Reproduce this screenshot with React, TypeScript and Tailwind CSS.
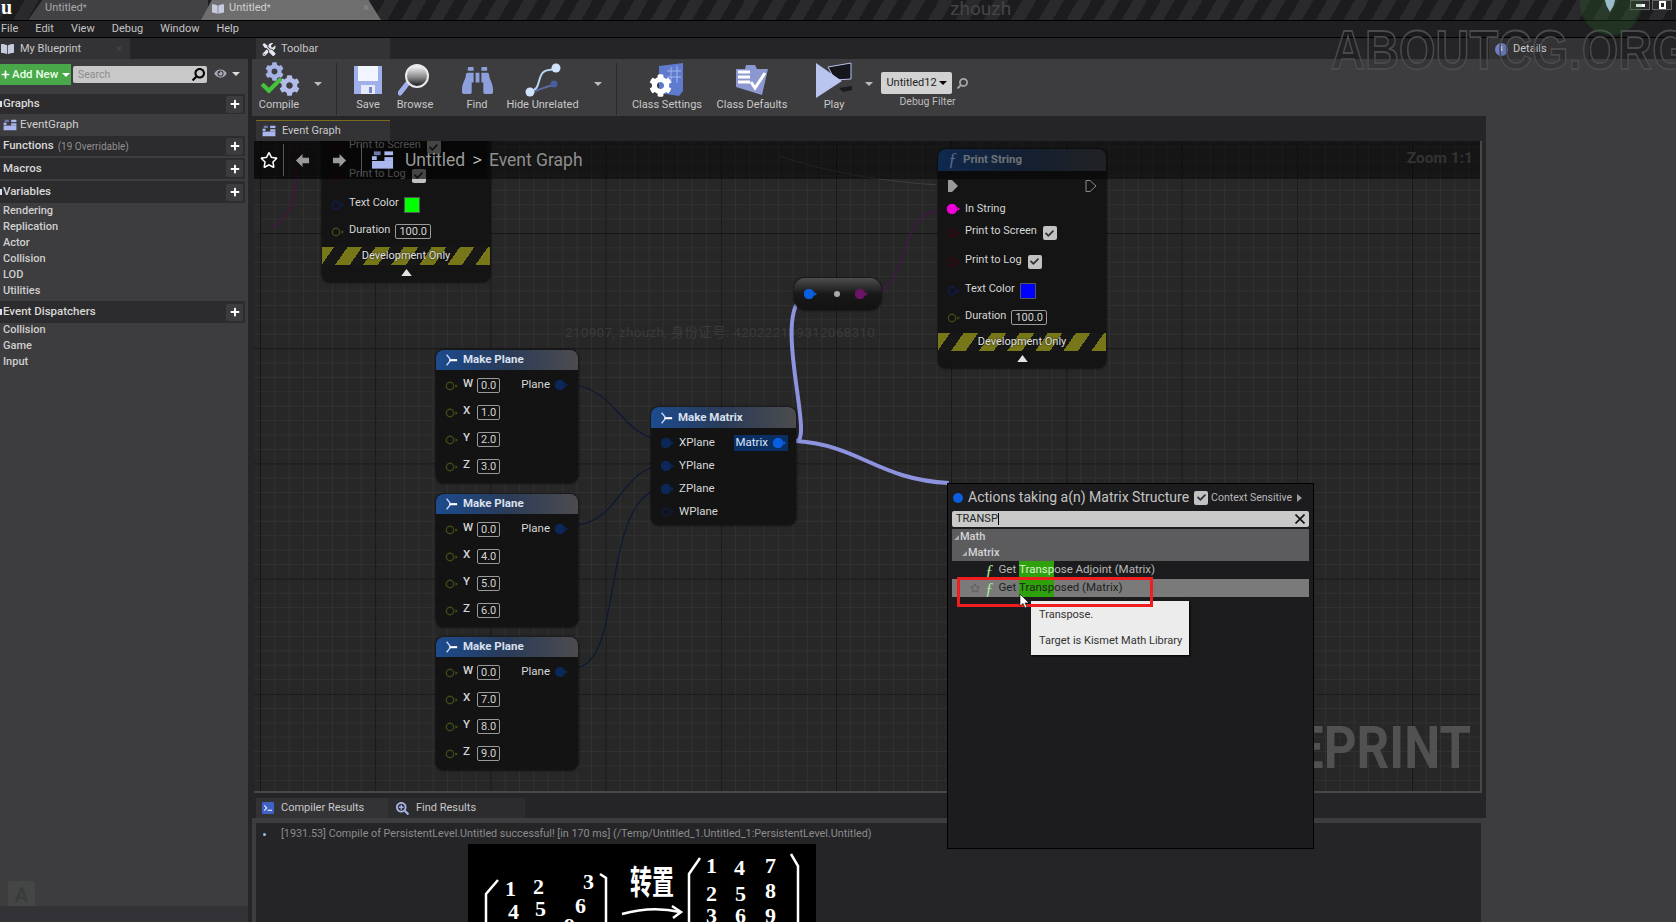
import React from 'react'
import { clsx } from 'clsx'
import { FaBookOpen, FaCheck, FaCog, FaEye, FaPlus, FaRegStar, FaSearch, FaTools, FaBinoculars, FaSearchPlus, FaTerminal } from 'react-icons/fa'

const GraphIcon = ({ className }: { className?: string }) => (
  <svg viewBox="0 0 24 20" className={className} fill="#aab6ee">
    <rect x="1" y="11" width="22" height="8" />
    <rect x="1" y="6" width="5" height="4" />
    <rect x="14" y="1" width="9" height="4" />
    <rect x="14" y="7" width="9" height="4" />
    <rect x="3" y="1" width="7" height="4" fill="#6d78b0" />
  </svg>
)

const MakeIcon = () => (
  <svg viewBox="0 0 16 16" className="h-[14px] w-[14px] shrink-0" fill="none">
    <path d="M3 2 L7 7 M3 14 L7 9" stroke="#c5d6ff" strokeWidth="1.6" />
    <rect x="6" y="7" width="9" height="2.4" fill="#ffffff" />
  </svg>
)

function Pin({ color, fill, arrow = true }: { color: string; fill?: boolean; arrow?: boolean }) {
  return (
    <svg viewBox="0 0 14 10" className="h-[10px] w-[14px] shrink-0">
      <circle cx="5" cy="5" r={fill ? 4.5 : 3.7} fill={fill ? color : 'none'} stroke={color} strokeWidth="1.4" />
      {arrow && <path d="M10.4 3 L13 5 L10.4 7 Z" fill={color} />}
    </svg>
  )
}

const InputBox = ({ value, className }: { value: string; className?: string }) => (
  <span className={clsx('rounded-[2px] border border-[#9a9a9a] px-[3px] text-[11px] leading-[13px] text-[#d4d4d4]', className)}>
    {value}
  </span>
)

function CheckBox({ className }: { className?: string }) {
  return (
    <span className={clsx('flex h-[14px] w-[14px] shrink-0 items-center justify-center rounded-[2px] bg-[#c2c2c2]', className)}>
      <FaCheck className="h-[9px] w-[9px] text-[#333]" />
    </span>
  )
}

function MakePlane({ className, values }: { className: string; values: string[] }) {
  const labels = ['W', 'X', 'Y', 'Z']
  return (
    <div className={clsx('absolute flex h-[133px] w-[142px] flex-col overflow-hidden rounded-lg bg-[#131314] shadow-[0_0_3px_#000]', className)}>
      <div className="flex h-[20px] items-center gap-[5px] bg-[linear-gradient(90deg,#1c4b8e,#2a3b58_50%,#4c4c4e)] pl-[8px] text-[11.5px] font-bold text-[#d9e0ee]">
        <MakeIcon />
        Make Plane
      </div>
      <div className="pt-[2px]">
        {labels.map((label, i) => (
          <div key={label} className="flex h-[27px] items-center pl-[9px] text-[11.5px] text-[#d6d6d6]">
            <Pin color="#3f4a18" />
            <span className="ml-[4px] mr-[5px] -mt-[3px] w-[9px] font-medium">{label}</span>
            <InputBox value={values[i]} />
            {i === 0 && (
              <span className="ml-auto mr-[9px] -mt-[2px] flex items-center gap-[5px]">
                Plane
                <Pin color="#0b2858" fill />
              </span>
            )}
          </div>
        ))}
      </div>
    </div>
  )
}

function PrintString({ className, swatch }: { className: string; swatch: string }) {
  return (
    <div className={clsx('absolute h-[219px] w-[168px] overflow-hidden rounded-lg bg-[#131413] text-[11px] text-[#d6d6d6] shadow-[0_0_3px_#000]', className)}>
      <div className="flex h-[22px] items-center gap-[6px] bg-[linear-gradient(90deg,#1c4b8e,#253a5c_50%,#3d3d40)] pl-[10px] text-[11.5px] font-bold text-[#c4ccd8]">
        <span className="text-[18px] italic [font-family:'Liberation_Serif',serif] font-normal text-[#9ec1f4]">ƒ</span>
        Print String
      </div>
      <div className="flex h-[26px] items-center justify-between px-[9px] pt-[3px]">
        <svg viewBox="0 0 12 12" className="h-[12px] w-[12px]"><path d="M1 0 H5 L11 6 L5 12 H1 Z" fill="#9a9a9a" /></svg>
        <svg viewBox="0 0 12 12" className="h-[12px] w-[12px]"><path d="M1 0.5 H5 L11 6 L5 11.5 H1 Z" fill="none" stroke="#8a8a8a" /></svg>
      </div>
      <div className="flex h-[24px] items-center gap-[4px] pl-[9px]">
        <Pin color="#f000d8" fill />
        In String
      </div>
      <div className="flex h-[24px] items-center gap-[4px] pl-[9px]">
        <Pin color="#3d0712" />
        <span className="-mt-[3px]">Print to Screen</span>
        <CheckBox className="ml-[2px]" />
      </div>
      <div className="flex h-[33px] items-center gap-[4px] pl-[9px]">
        <Pin color="#3d0712" />
        <span className="-mt-[3px]">Print to Log</span>
        <CheckBox className="ml-[2px]" />
      </div>
      <div className="flex h-[26px] items-center gap-[4px] pl-[9px]">
        <Pin color="#101c58" />
        <span className="-mt-[3px]">Text Color</span>
        <span className={clsx('ml-[1px] h-[16px] w-[16px] border border-[#555]', swatch)} />
      </div>
      <div className="flex h-[27px] items-center gap-[4px] pl-[9px]">
        <Pin color="#3f4a18" />
        <span className="-mt-[3px]">Duration</span>
        <InputBox value="100.0" className="ml-[1px]" />
      </div>
      <div className="mt-[2px] flex h-[18px] items-center justify-center bg-[repeating-linear-gradient(-55deg,#77771a_0_12px,#171717_12px_23px)] text-[#e0e0e0] [text-shadow:0_0_2px_#000]">
        Development Only
      </div>
      <div className="flex h-[14px] items-center justify-center">
        <svg viewBox="0 0 12 8" className="h-[7px] w-[11px]"><path d="M6 0 L12 8 H0 Z" fill="#e4e4e4" /></svg>
      </div>
    </div>
  )
}

function MakeMatrix() {
  const rows = [
    { label: 'XPlane', pin: '#0b2858', fill: true },
    { label: 'YPlane', pin: '#0b2858', fill: true },
    { label: 'ZPlane', pin: '#0b2858', fill: true },
    { label: 'WPlane', pin: '#101c48', fill: false },
  ]
  return (
    <div className="absolute left-[397px] top-[266px] h-[118px] w-[145px] overflow-hidden rounded-lg bg-[#131314] text-[11.5px] text-[#d6d6d6] shadow-[0_0_3px_#000]">
      <div className="flex h-[21px] items-center gap-[5px] bg-[linear-gradient(90deg,#1c4b8e,#2a3b58_50%,#4c4c4e)] pl-[8px] font-bold text-[#d9e0ee]">
        <MakeIcon />
        Make Matrix
      </div>
      <div className="pt-[3px]">
        {rows.map((row, i) => (
          <div key={row.label} className="flex h-[23px] items-center gap-[4px] pl-[10px]">
            <Pin color={row.pin} fill={row.fill} />
            {row.label}
            {i === 0 && (
              <span className="ml-auto mr-[8px] flex h-[16px] items-center gap-[5px] bg-[#0c2f63] pl-[2px] pr-[1px] text-[#dbe6ff]">
                Matrix
                <Pin color="#0a5fe0" fill />
              </span>
            )}
          </div>
        ))}
      </div>
    </div>
  )
}

function Wires() {
  return (
    <svg viewBox="254 140 1228 652" className="absolute inset-0 h-full w-full" fill="none">
      <path d="M578 385 C620 395 620 435 665 441" stroke="#0c1838" strokeWidth="1.2" />
      <path d="M578 525 C620 520 620 470 665 464" stroke="#0c1838" strokeWidth="1.2" />
      <path d="M578 668 C625 660 600 495 665 487" stroke="#0c1838" strokeWidth="1.2" />
      <path d="M270 228 C300 210 292 185 298 140" stroke="#4a1440" strokeWidth="1.5" />
      <path d="M780 155 C830 172 880 180 938 184" stroke="#3c3c3c" strokeWidth="1.2" />
      <path d="M868 294 C915 290 895 215 940 210" stroke="#4a1450" strokeWidth="1.2" />
      <path d="M782 441 H797 C815 441 775 320 802 298 L809 294" stroke="#8e93e0" strokeWidth="4" />
      <path d="M782 441 H797 C860 445 880 480 950 483" stroke="#8e93e0" strokeWidth="4" />
    </svg>
  )
}

function SectionHeader({ label, note, marker, className }: { label: string; note?: string; marker?: boolean; className: string }) {
  return (
    <div className={clsx('flex w-[245px] items-center bg-[#2c2b2d] pl-[3px] pr-[2px] text-[11.5px] font-medium text-[#d8d8d8]', className)}>
      {marker && <span className="-ml-[3px] mr-[1px] h-[6px] w-[2px] bg-[#ddd]" />}
      {label}
      {note && <span className="ml-[4px] text-[10px] font-normal text-[#909090]">{note}</span>}
      <span className="ml-auto flex h-[17px] w-[17px] items-center justify-center rounded-[2px] bg-[#3b3a3c]">
        <FaPlus className="h-[10px] w-[10px] text-white" />
      </span>
    </div>
  )
}

const SubRow = ({ label }: { label: string }) => (
  <div className="flex h-[16px] items-center pl-[3px] text-[11px] font-medium text-[#cfcfcf]">{label}</div>
)

function LeftPanel() {
  return (
    <div className="flex w-[248px] shrink-0 flex-col">
      <div className="flex h-[21px] bg-[#252427]">
        <div className="flex w-[130px] items-center gap-[6px] bg-[#333235] pl-[1px] pt-[1px] text-[11px] text-[#c8c8c8]">
          <FaBookOpen className="h-[12px] w-[13px] text-[#c6cbe0]" />
          My Blueprint
          <span className="ml-auto mr-[8px] text-[#4a4a4a]">×</span>
        </div>
      </div>
      <div className="relative flex-1 bg-[#3d3c3e]">
        <div className="flex h-[35px] items-start pt-[5px]">
          <div className="flex h-[21px] w-[71px] items-center gap-[2px] bg-[#48a84a] pl-[1px] text-[11.5px] font-medium text-[#e8ffe8]">
            <FaPlus className="h-[9px] w-[9px] text-white" />
            Add New
            <span className="ml-[2px] h-0 w-0 border-x-[4px] border-t-[4px] border-x-transparent border-t-white" />
          </div>
          <div className="ml-[2px] mt-[2px] flex h-[17px] w-[134px] items-center rounded-[2px] bg-[#c9c8c9] pl-[5px] pr-[2px] text-[10.5px] text-[#8c8c8c]">
            Search
            <FaSearch className="ml-auto h-[13px] w-[13px] -scale-x-100 text-black" />
          </div>
          <FaEye className="ml-[6px] mt-[4px] h-[11px] w-[15px] text-[#a9a9bb]" />
          <span className="ml-[4px] mt-[8px] h-0 w-0 border-x-[4px] border-t-[4px] border-x-transparent border-t-[#ddd]" />
        </div>
        <SectionHeader label="Graphs" marker className="h-[20px]" />
        <div className="flex h-[21px] items-center gap-[3px] pl-[3px] text-[11.5px] text-[#cfcfcf]">
          <GraphIcon className="h-[12px] w-[14px]" />
          EventGraph
        </div>
        <SectionHeader label="Functions" note="(19 Overridable)" className="mt-[1px] h-[20px]" />
        <SectionHeader label="Macros" className="mt-[2px] h-[21px]" />
        <SectionHeader label="Variables" marker className="mt-[2px] h-[22px]" />
        {['Rendering', 'Replication', 'Actor', 'Collision', 'LOD', 'Utilities'].map((label) => (
          <SubRow key={label} label={label} />
        ))}
        <SectionHeader label="Event Dispatchers" marker className="mt-[2px] h-[22px]" />
        <div className="-mt-[1px]">
          {['Collision', 'Game', 'Input'].map((label) => (
            <SubRow key={label} label={label} />
          ))}
        </div>
        <div className="absolute left-[8px] top-[822px] flex h-[28px] w-[27px] items-center justify-center rounded-[3px] bg-[#434645] text-[20px] font-bold text-[#3a3c3c]">
          A
        </div>
        <div className="absolute inset-x-0 bottom-0 h-[18px] bg-[#333237]" />
      </div>
    </div>
  )
}

const ToolSep = () => <span className="h-[52px] w-px shrink-0 self-center bg-[#2a2a2c]" />

const Caret = () => <span className="h-0 w-0 border-x-[4px] border-t-[4px] border-x-transparent border-t-[#bcbcbc]" />

function ToolButton({ label, width, children }: { label: string; width: string; children: React.ReactNode }) {
  return (
    <div className={clsx('flex shrink-0 flex-col items-center', width)}>
      <div className="flex h-[36px] items-center justify-center">{children}</div>
      <span className="whitespace-nowrap text-[11px] leading-[14px] text-[#c9c9c9]">{label}</span>
    </div>
  )
}

function Toolbar() {
  return (
    <div className="flex h-[57px] items-start bg-[#3d3c3e] pl-[6px] pt-[3px]">
      <ToolButton label="Compile" width="w-[42px]">
        <span className="relative block h-[36px] w-[38px]">
          <FaCog className="absolute left-[5px] top-0 h-[19px] w-[19px] text-[#a6b2e6]" />
          <FaCog className="absolute left-[19px] top-[13px] h-[21px] w-[21px] text-[#b3bdea]" />
          <FaCheck className="absolute left-0 top-[13px] h-[21px] w-[23px] text-[#45c23c]" />
        </span>
      </ToolButton>
      <span className="flex h-[44px] w-[36px] shrink-0 items-center justify-center"><Caret /></span>
      <ToolSep />
      <div className="ml-[9px] flex gap-[3px]">
        <ToolButton label="Save" width="w-[44px]">
          <svg viewBox="0 0 30 30" className="h-[30px] w-[30px]">
            <path d="M1 1 H29 V29 H1 Z" fill="#9fb0ea" />
            <rect x="5" y="1" width="20" height="15" fill="#f2f4ff" />
            <rect x="8" y="20" width="14" height="9" fill="#e6e9fa" />
            <rect x="16" y="22" width="3" height="6" fill="#7886c4" />
          </svg>
        </ToolButton>
        <ToolButton label="Browse" width="w-[44px]">
          <svg viewBox="0 0 34 34" className="h-[34px] w-[34px]">
            <defs>
              <linearGradient id="lens" x1="0" y1="0" x2="0" y2="1">
                <stop offset="0" stopColor="#ffffff" />
                <stop offset="0.55" stopColor="#8a8a8a" />
                <stop offset="1" stopColor="#111111" />
              </linearGradient>
            </defs>
            <path d="M9 21 L2 30" stroke="#9fb0ea" strokeWidth="5" strokeLinecap="round" />
            <circle cx="19" cy="13" r="11" fill="url(#lens)" stroke="#e8e8ee" strokeWidth="2" />
          </svg>
        </ToolButton>
      </div>
      <span className="ml-[10px]"><ToolSep /></span>
      <div className="ml-[8px]">
        <ToolButton label="Find" width="w-[44px]">
          <FaBinoculars className="h-[31px] w-[33px] text-[#8ea0dc]" />
        </ToolButton>
      </div>
      <div className="ml-[6px]">
        <ToolButton label="Hide Unrelated" width="w-[75px]">
          <svg viewBox="0 0 36 34" className="h-[34px] w-[36px]" fill="none">
            <path d="M5 28 C18 28 10 8 24 7 L30 6" stroke="#b7d8f4" strokeWidth="2" />
            <path d="M7 29 C16 26 20 24 28 22" stroke="#5a6aa0" strokeWidth="2" />
            <circle cx="31" cy="5" r="4.5" fill="#cfe4fb" />
            <circle cx="29" cy="21" r="3.5" fill="#4b5d9c" />
            <circle cx="5" cy="29" r="4.5" fill="#cfe4fb" />
          </svg>
        </ToolButton>
      </div>
      <span className="flex h-[44px] w-[36px] shrink-0 items-center justify-center"><Caret /></span>
      <ToolSep />
      <div className="ml-[9px] flex gap-[3px]">
        <ToolButton label="Class Settings" width="w-[82px]">
          <span className="relative block h-[34px] w-[36px]">
            <svg viewBox="0 0 36 34" className="absolute inset-0 h-[34px] w-[36px]">
              <path d="M10 3 L34 0 V28 L30 33 L10 30 Z" fill="#5f7bd0" />
              <path d="M18 8 H32 M18 14 H32 M22 4 V20 M28 3 V20" stroke="#a4b6ec" />
            </svg>
            <FaCog className="absolute left-0 top-[11px] h-[23px] w-[23px] text-white" />
          </span>
        </ToolButton>
        <ToolButton label="Class Defaults" width="w-[82px]">
          <svg viewBox="0 0 34 32" className="h-[32px] w-[34px]">
            <path d="M1 5 H10 L11 1 H20 L22 5 H33 L27 31 L1 23 Z" fill="#8d97d0" />
            <path d="M3 8 H15 M3 13 H15 M3 18 H15" stroke="#ffffff" strokeWidth="3" />
            <path d="M16 18 L20 24 L30 9" stroke="#ffffff" strokeWidth="3" fill="none" />
          </svg>
        </ToolButton>
      </div>
      <span className="ml-[10px]"><ToolSep /></span>
      <div className="ml-[9px]">
        <ToolButton label="Play" width="w-[44px]">
          <svg viewBox="0 0 38 36" className="h-[36px] w-[38px]">
            <path d="M13 5 L36 1 V17 L20 18 Z" fill="#15161c" stroke="#b8c2ee" />
            <path d="M1 1 L27 19 L1 36 Z" fill="#b9c4ef" />
            <path d="M24 26 L37 24 V28 L28 30 Z" fill="#1b1b1d" />
          </svg>
        </ToolButton>
      </div>
      <span className="flex h-[44px] w-[25px] shrink-0 items-center justify-center"><Caret /></span>
      <div className="flex flex-col items-center pt-[10px]">
        <div className="flex items-center">
          <div className="flex h-[22px] w-[71px] items-center justify-center gap-[2px] rounded-[2px] bg-[#d2d2d2] text-[11px] text-[#222]">
            Untitled12
            <span className="h-0 w-0 border-x-[4px] border-t-[4px] border-x-transparent border-t-black" />
          </div>
          <FaSearch className="ml-[5px] h-[11px] w-[11px] -scale-x-100 text-[#a8a8a8]" />
        </div>
        <span className="mt-[1px] pl-[6px] text-[10.5px] leading-[13px] text-[#bdbdbd]">Debug Filter</span>
      </div>
    </div>
  )
}

const NavArrow = ({ className }: { className: string }) => (
  <svg viewBox="0 0 16 16" className={className}>
    <path d="M8 1 L1 8 L8 15 V11 H15 V5 H8 Z" fill="#9a9a9a" />
  </svg>
)

function Breadcrumb() {
  return (
    <div className="absolute inset-x-0 top-0 flex h-[38px] items-center bg-black/45 text-[#9a9a9a]">
      <div className="absolute inset-y-0 left-0 w-[233px] bg-black/35" />
      <div className="relative flex items-center">
        <FaRegStar className="ml-[6px] h-[18px] w-[18px] text-white" />
        <span className="ml-[5px] h-[32px] w-px bg-[#555]" />
        <NavArrow className="ml-[11px] h-[15px] w-[15px]" />
        <NavArrow className="ml-[22px] h-[15px] w-[15px] -scale-x-100" />
        <span className="ml-[14px] h-[32px] w-px bg-[#555]" />
        <GraphIcon className="ml-[9px] h-[20px] w-[23px]" />
        <span className="ml-[11px] text-[17.5px]">Untitled</span>
        <span className="mx-[7px] text-[19px] font-light text-[#d0d0d0]">&gt;</span>
        <span className="text-[17.5px] text-[#8f8f8f]">Event Graph</span>
      </div>
      <span className="absolute right-[7px] top-[6px] text-[15.5px] font-bold text-[#333]">Zoom 1:1</span>
    </div>
  )
}

function Canvas() {
  return (
    <div className="relative h-[652px] w-[1228px] overflow-hidden border-b-2 border-r-2 border-[#48474a] bg-[#272727] bg-[linear-gradient(#161616_1px,transparent_1px),linear-gradient(90deg,#161616_1px,transparent_1px),linear-gradient(#313131_1px,transparent_1px),linear-gradient(90deg,#313131_1px,transparent_1px)] bg-[size:115.2px_115.2px,115.2px_115.2px,14.4px_14.4px,14.4px_14.4px] bg-[position:6px_92px,6px_92px,6px_92px,6px_92px]">
      <span className="absolute right-[9px] top-[572px] scale-y-[1.16] whitespace-nowrap text-[51px] font-bold leading-[70px] text-[#515151]">
        BLUEPRINT
      </span>
      <span className="absolute left-[311px] top-[181px] whitespace-nowrap text-[13.5px] tracking-[0.3px] text-[#3a3a3a] [font-family:Roboto,'Noto_Sans_CJK_SC',sans-serif]">
        210907, zhouzh, 身份证号: 420222199312068310
      </span>
      <Wires />
      <span className="absolute -left-[5px] top-[64px] h-[32px] w-[11px] rounded-r-lg bg-[#2a2a2b]" />
      <PrintString className="left-[68px] -top-[78px]" swatch="bg-[#00ff00]" />
      <PrintString className="left-[684px] top-[8px]" swatch="bg-[#0000ff]" />
      <MakePlane className="left-[182px] top-[209px]" values={['0.0', '1.0', '2.0', '3.0']} />
      <MakePlane className="left-[182px] top-[353px]" values={['0.0', '4.0', '5.0', '6.0']} />
      <MakePlane className="left-[182px] top-[496px]" values={['0.0', '7.0', '8.0', '9.0']} />
      <MakeMatrix />
      <div className="absolute left-[540px] top-[137px] flex h-[32px] w-[87px] items-center justify-between rounded-[11px] bg-[linear-gradient(#4d4d4f,#181818_50%,#121212)] pl-[10px] pr-[12px] shadow-[0_0_3px_#000]">
        <Pin color="#0a5fe0" fill />
        <span className="h-[6px] w-[6px] rounded-full bg-[#aaa]" />
        <Pin color="#6a1566" fill />
      </div>
      <Breadcrumb />
    </div>
  )
}

function ActionMenu() {
  return (
    <div className="absolute left-[947px] top-[483px] h-[366px] w-[367px] border border-black bg-[#1c1c1e] px-[4px] text-[11.5px]">
      <div className="flex h-[27px] items-center whitespace-nowrap pl-[1px] text-[#c4c4c4]">
        <span className="h-[10px] w-[10px] shrink-0 rounded-full bg-[#0a5fe0]" />
        <span className="ml-[5px] text-[14px]">Actions taking a(n) Matrix Structure</span>
        <CheckBox className="ml-[5px] h-[13px] w-[13px]" />
        <span className="ml-[3px] text-[10.5px] text-[#b8b8b8]">Context Sensitive</span>
        <span className="ml-[5px] h-0 w-0 border-y-[4px] border-l-[5px] border-y-transparent border-l-[#9a9a9a]" />
      </div>
      <div className="flex h-[16px] items-center rounded-[2px] bg-[#c9c9c9] pl-[4px] pr-[4px] text-[11px] text-[#222]">
        TRANSP<span className="h-[12px] w-px bg-black" />
        <svg viewBox="0 0 10 10" className="ml-auto h-[10px] w-[10px]"><path d="M0.5 0.5 L9.5 9.5 M9.5 0.5 L0.5 9.5" stroke="#111" strokeWidth="1.6" /></svg>
      </div>
      <div className="mt-[2px] bg-[#5c5c5f] text-[11px] font-medium text-[#d4d4d4]">
        <div className="flex h-[16px] items-center pl-[2px]">
          <span className="mr-[1px] h-0 w-0 border-b-[5px] border-l-[5px] border-b-[#aaa] border-l-transparent" />
          Math
        </div>
        <div className="flex h-[16px] items-center pl-[10px]">
          <span className="mr-[1px] h-0 w-0 border-b-[5px] border-l-[5px] border-b-[#aaa] border-l-transparent" />
          Matrix
        </div>
      </div>
      <div className="flex h-[18px] items-center pl-[33px] text-[#b8b8b8]">
        <span className="mr-[5px] text-[17px] italic leading-none text-[#a8e89c] [font-family:'Liberation_Serif',serif]">ƒ</span>
        Get&nbsp;<span className="bg-[#2ea10d] text-[#d8f5d0]">Transp</span>ose Adjoint (Matrix)
      </div>
      <div className="flex h-[18px] items-center bg-[#7a7a7a] pl-[18px] text-[#1e1e1e]">
        <FaRegStar className="mr-[5px] h-[10px] w-[10px] text-[#5c5c5c]" />
        <span className="mr-[5px] text-[17px] italic leading-none text-[#a8e89c] [font-family:'Liberation_Serif',serif]">ƒ</span>
        Get&nbsp;<span className="bg-[#2ea10d]">Transp</span>osed (Matrix)
      </div>
    </div>
  )
}

function Overlays() {
  return (
    <>
      <div className="absolute left-[1031px] top-[601px] flex h-[54px] w-[158px] flex-col justify-between bg-[#ececec] px-[8px] py-[7px] text-[11px] leading-[14px] text-[#333] shadow-[1px_1px_2px_#000]">
        <span>Transpose.</span>
        <span className="whitespace-nowrap">Target is Kismet Math Library</span>
      </div>
      <div className="absolute left-[957px] top-[577px] h-[30px] w-[196px] border-[3px] border-[#f01e1e]" />
      <svg viewBox="0 0 12 16" className="absolute left-[1019px] top-[593px] h-[16px] w-[12px]">
        <path d="M1 1 V13 L4 10.5 L6 15 L8 14 L6 10 H10 Z" fill="#fff" stroke="#000" strokeWidth="0.6" />
      </svg>
      <span className="absolute left-[950px] -top-[5px] text-[19px] text-[#444]">zhouzh</span>
      <span className="absolute left-[1331px] top-[18px] origin-center scale-y-[1.19] whitespace-nowrap text-[47px] font-bold leading-[64px] text-black/10 [-webkit-text-stroke:1.5px_#4a4a4c] [font-family:'Liberation_Sans',sans-serif]">
        ABOUTCG.ORG
      </span>
      <div className="absolute left-[1580px] -top-[32px] h-[67px] w-[62px] rounded-full bg-[#2d6b2d]/25" />
    </>
  )
}

function HandwrittenImage() {
  const digits = [
    { d: '1', c: 'left-[37px] top-[33px]' },
    { d: '2', c: 'left-[65px] top-[31px]' },
    { d: '3', c: 'left-[115px] top-[26px]' },
    { d: '4', c: 'left-[40px] top-[56px]' },
    { d: '5', c: 'left-[67px] top-[53px]' },
    { d: '6', c: 'left-[107px] top-[50px]' },
    { d: '9', c: 'left-[96px] top-[70px]' },
    { d: '1', c: 'left-[238px] top-[10px]' },
    { d: '4', c: 'left-[266px] top-[12px]' },
    { d: '7', c: 'left-[297px] top-[10px]' },
    { d: '2', c: 'left-[238px] top-[38px]' },
    { d: '5', c: 'left-[267px] top-[38px]' },
    { d: '8', c: 'left-[297px] top-[35px]' },
    { d: '3', c: 'left-[238px] top-[60px]' },
    { d: '6', c: 'left-[267px] top-[60px]' },
    { d: '9', c: 'left-[297px] top-[60px]' },
  ]
  return (
    <div className="relative ml-[212px] mt-[1px] h-[80px] w-[348px] overflow-hidden bg-black text-white [font-family:'Liberation_Serif',serif]">
      {digits.map((item, i) => (
        <span key={i} className={clsx('absolute text-[22px] font-bold leading-[24px]', item.c)}>{item.d}</span>
      ))}
      <span className="absolute left-[162px] top-[18px] origin-top scale-y-150 text-[22px] font-bold leading-[22px] [font-family:'Noto_Sans_CJK_SC',sans-serif]">转置</span>
      <svg viewBox="0 0 348 80" className="absolute inset-0 h-full w-full" fill="none" stroke="#fff" strokeWidth="2.5">
        <path d="M30 36 L18 50 V80" />
        <path d="M132 30 L138 34 V80" />
        <path d="M232 14 L221 30 V80" />
        <path d="M323 10 L330 22 V80" />
        <path d="M154 70 C175 64 195 64 212 68 M204 62 L213 68 L205 74" />
      </svg>
    </div>
  )
}

function BottomPanel() {
  return (
    <div className="flex flex-1 flex-col">
      <div className="flex h-[25px] items-end pl-[4px] text-[11px] text-[#c8c8c8]">
        <div className="flex h-[20px] w-[132px] items-center gap-[7px] bg-[#333235] pl-[6px]">
          <FaTerminal className="h-[12px] w-[12px] rounded-[1px] bg-[#3e62c6] p-[2px] text-white" />
          Compiler Results
        </div>
        <div className="flex h-[20px] w-[137px] items-center gap-[7px] bg-[#2c2b2e] pl-[8px]">
          <FaSearchPlus className="h-[13px] w-[13px] text-[#a6b2e6]" />
          Find Results
        </div>
      </div>
      <div className="flex-1 border-r-[5px] border-t-[5px] border-l-[4px] border-[#3d3c3e] bg-[#252427] pt-[3px]">
        <div className="flex h-[17px] items-center pl-[7px] text-[10.8px] text-[#8c8c8c]">
          <span className="mr-[15px] h-[3px] w-[3px] rounded-full bg-[#8cc4f0]" />
          [1931.53] Compile of PersistentLevel.Untitled successful! [in 170 ms] (/Temp/Untitled_1.Untitled_1:PersistentLevel.Untitled)
        </div>
        <HandwrittenImage />
      </div>
    </div>
  )
}

function TitleBar() {
  return (
    <div className="flex h-[21px] shrink-0 items-end overflow-hidden border-b border-black bg-[#232325] bg-[repeating-linear-gradient(-60deg,#1c1c1e_0_12px,#2a2a2c_12px_24px)]">
      <span className="ml-px h-[20px] w-[30px] text-[20px] font-bold leading-[14px] text-white [font-family:'Liberation_Serif',serif]">u</span>
      <div className="-ml-[3px] flex h-[20px] w-[180px] items-center bg-[#424244] pb-[3px] pl-[17px] text-[11px] text-[#a8a8a8] [clip-path:polygon(8%_0,100%_0,100%_100%,0_100%)]">
        Untitled<span className="text-[9px]">*</span>
      </div>
      <div className="-ml-[7px] flex h-[20px] w-[180px] items-center bg-[#6e6e6f] pb-[3px] pl-[11px] text-[11px] text-[#d0d0d0] [clip-path:polygon(6%_0,93%_0,100%_100%,0_100%)]">
        <FaBookOpen className="mr-[5px] h-[12px] w-[12px] text-[#c6cbe0]" />
        Untitled<span className="text-[9px]">*</span>
        <span className="ml-auto mr-[12px] text-[#8c8c8c]">×</span>
      </div>
      <div className="ml-auto mr-[4px] flex items-start gap-[2px] self-start">
        <svg viewBox="0 0 14 14" className="mr-[12px] h-[12px] w-[12px]"><path d="M1 0 H13 L11 7 L7 14 L3 7 Z" fill="#c0d6ff" /></svg>
        <span className="flex h-[10px] w-[20px] items-center justify-center border border-[#666] bg-[#2a2a2a]"><span className="h-[3px] w-[9px] bg-white" /></span>
        <span className="flex h-[10px] w-[20px] items-center justify-center border border-[#666] bg-[#2a2a2a]"><span className="h-[8px] w-[7px] border-2 border-white" /></span>
      </div>
    </div>
  )
}

export default function App() {
  return (
    <div className="relative flex h-[922px] w-[1676px] flex-col overflow-hidden bg-[#252427] [font-family:Roboto,sans-serif]">
      <TitleBar />
      <div className="flex h-[17px] shrink-0 items-center gap-[17px] border-b border-black bg-[#1f1f21] pl-px text-[11px] text-[#c4c4c4]">
        {['File', 'Edit', 'View', 'Debug', 'Window', 'Help'].map((item) => (
          <span key={item}>{item}</span>
        ))}
      </div>
      <div className="flex flex-1">
        <LeftPanel />
        <div className="flex w-[1238px] shrink-0 flex-col pl-[4px]">
          <div className="flex h-[21px] pl-[4px]">
            <div className="flex w-[134px] items-center gap-[5px] bg-[#333235] pl-[6px] pt-[1px] text-[11px] text-[#c8c8c8]">
              <FaTools className="h-[13px] w-[14px] text-[#e6e6f0]" />
              Toolbar
            </div>
          </div>
          <Toolbar />
          <div className="mt-[4px] flex h-[21px] pl-[4px]">
            <div className="flex w-[134px] items-center gap-[6px] border-t border-[#7a6a20] bg-[#333235] pl-[6px] text-[11px] text-[#c8c8c8]">
              <GraphIcon className="h-[12px] w-[14px]" />
              Event Graph
            </div>
          </div>
          <div className="pl-[2px]">
            <Canvas />
          </div>
          <BottomPanel />
        </div>
        <div className="flex flex-1 flex-col">
          <div className="flex h-[21px] pl-[3px]">
            <div className="flex w-[100px] items-center gap-[5px] bg-[#333235] pl-[6px] pt-[1px] text-[11px] text-[#c8c8c8]">
              <span className="flex h-[13px] w-[13px] items-center justify-center rounded-full bg-[#6f80c8] text-[9px] text-white">i</span>
              Details
            </div>
          </div>
          <div className="flex-1 bg-[#3d3c3e]" />
        </div>
      </div>
      <ActionMenu />
      <Overlays />
    </div>
  )
}
